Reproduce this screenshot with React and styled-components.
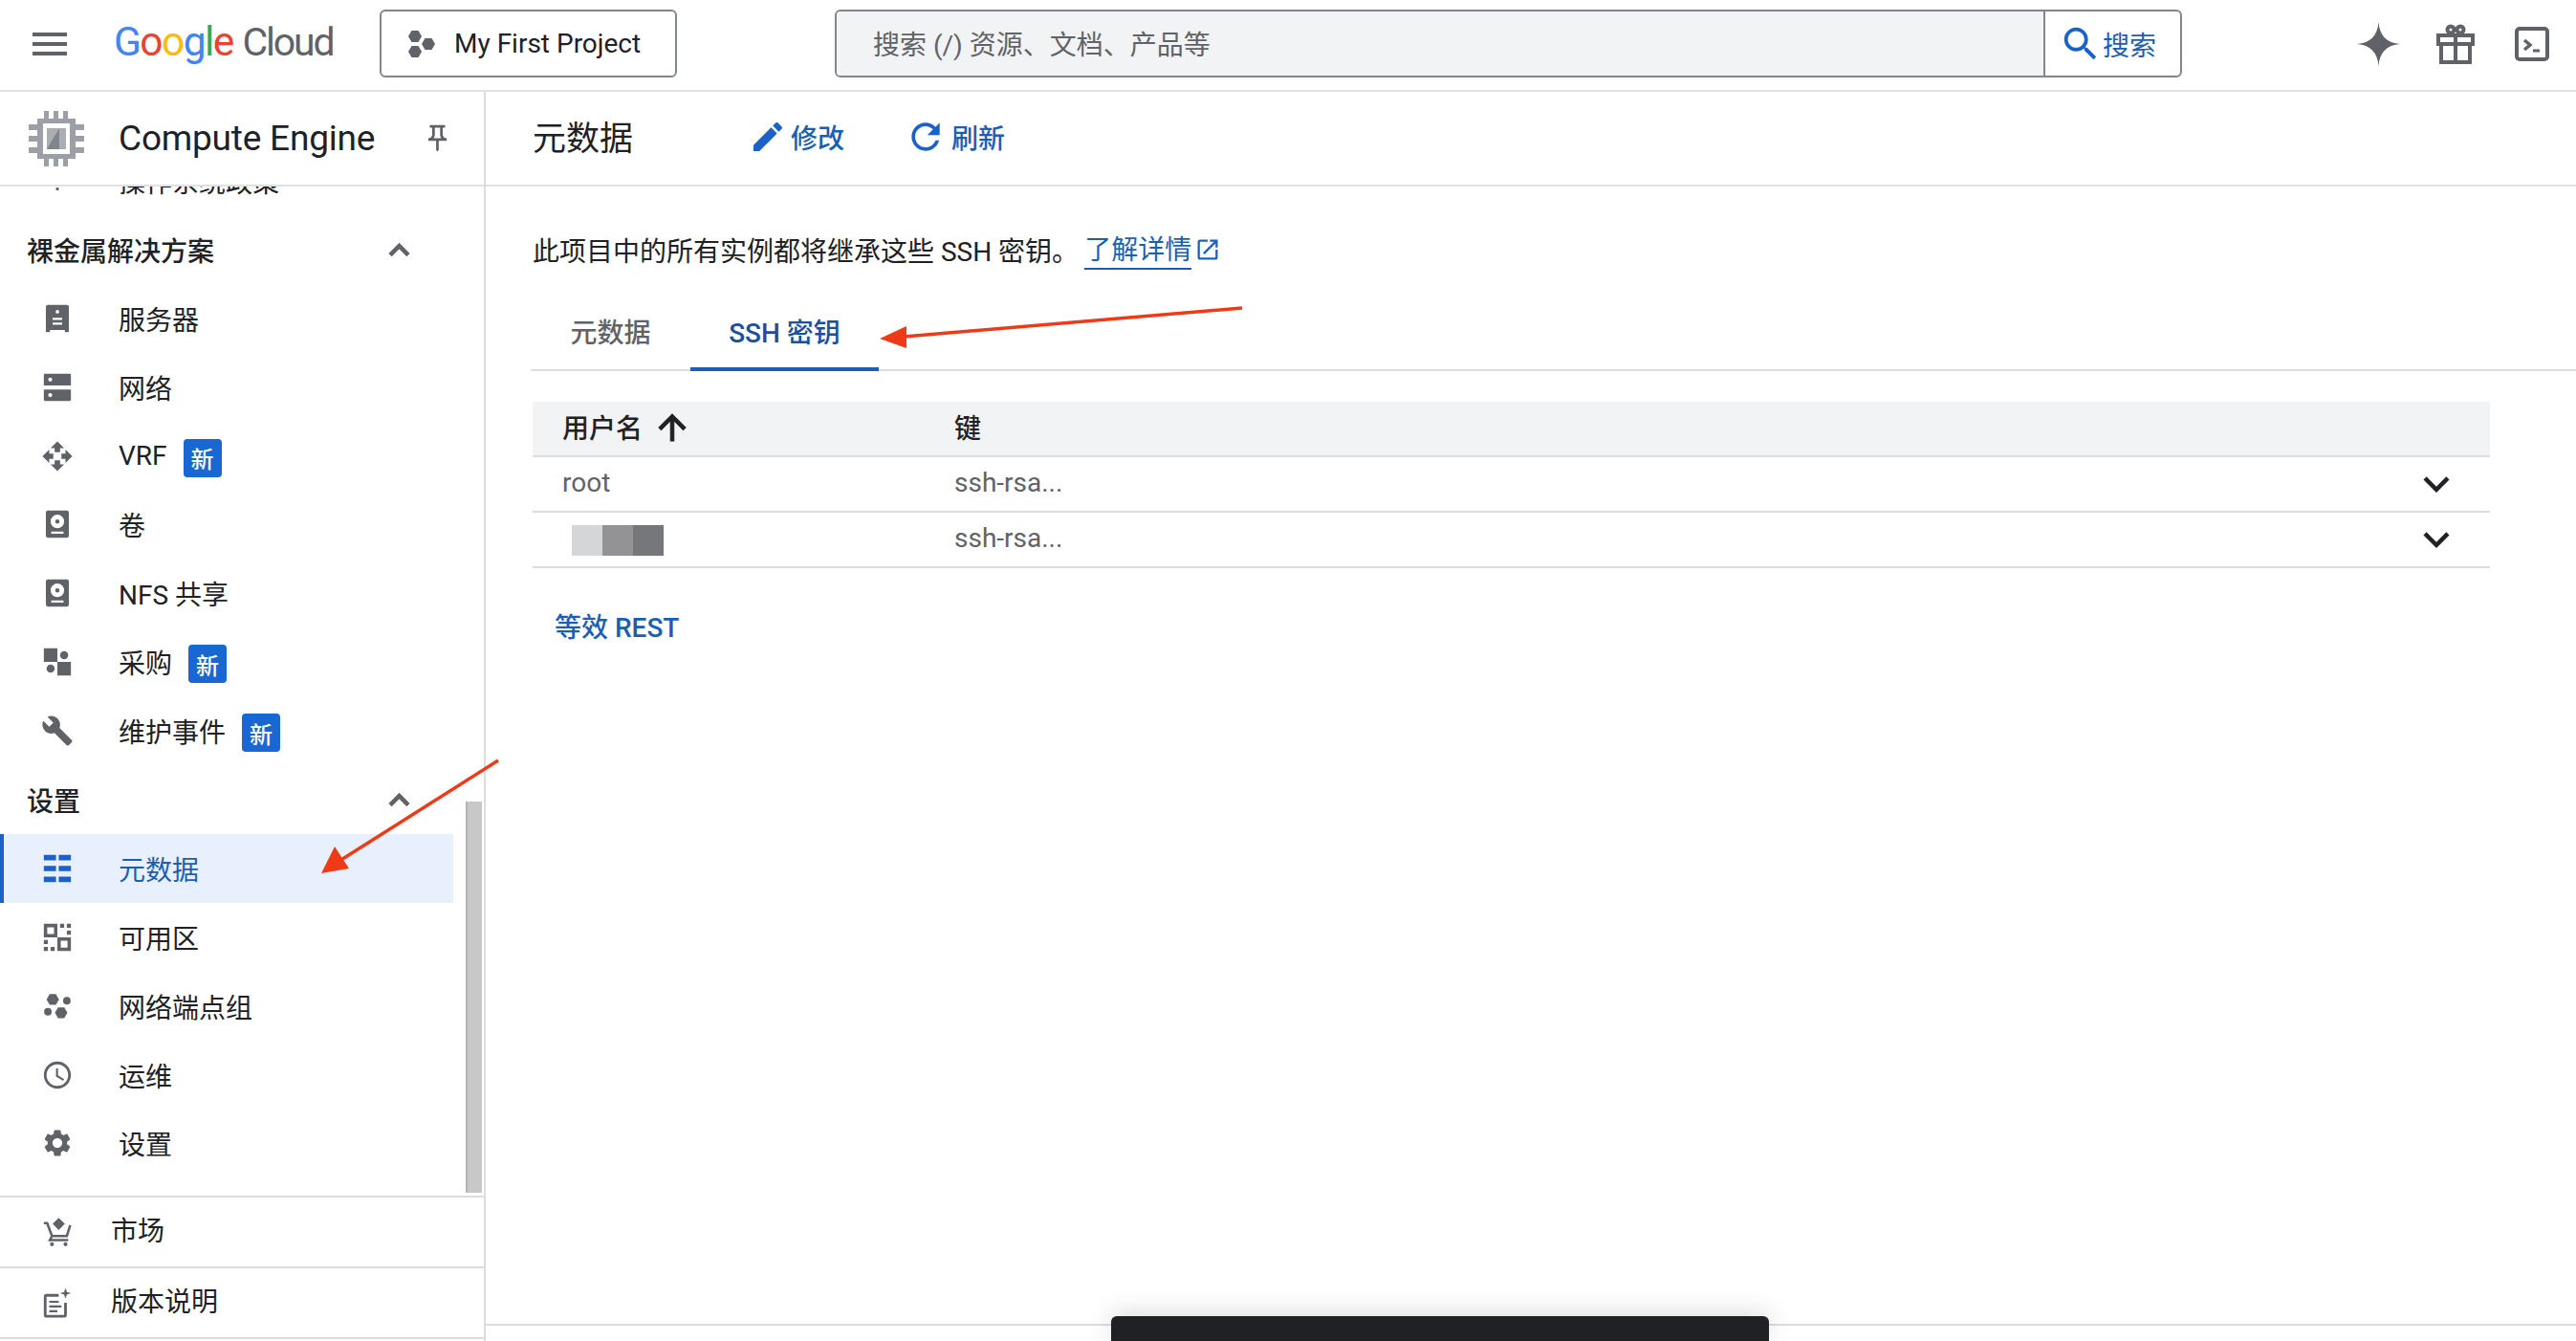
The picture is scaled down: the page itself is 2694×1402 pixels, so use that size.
import React from "react";
import styled, { createGlobalStyle } from "styled-components";

const FONT = `Roboto, "Noto Sans CJK SC", sans-serif`;

const GlobalStyle = createGlobalStyle`
  html, body {
    margin: 0;
    padding: 0;
    background: #fff;
  }
  body {
    font-family: ${FONT};
    color: #202124;
  }
`;

const Page = styled.div`
  position: relative;
  display: flex;
  flex-direction: column;
  width: 2694px;
  height: 1402px;
  overflow: hidden;
  background: #fff;
`;

const TopBar = styled.header`
  display: flex;
  align-items: center;
  height: 91px;
  flex: none;
  border-bottom: 2px solid #dfe1e3;
  padding: 0 0 3px 28px;
`;

const Burger = styled.svg`
  width: 48px;
  height: 48px;
  margin-right: 43px;
  fill: #5f6368;
`;

const Logo = styled.div`
  display: flex;
  align-items: baseline;
  width: 278px;
  font-size: 42.5px;
  letter-spacing: -1.6px;
  line-height: 1;
  margin-top: -2px;
`;

const LogoLetter = styled.span`
  color: ${(p) => p.$color};
`;

const LogoCloud = styled.span`
  color: #5f6368;
  margin-left: 10px;
  font-size: 41px;
  letter-spacing: -2.2px;
`;

const ProjectButton = styled.div`
  display: flex;
  align-items: center;
  width: 311px;
  height: 71px;
  box-sizing: border-box;
  border: 2px solid #80868b;
  border-radius: 6px;
  padding-left: 28px;
  margin-right: 165px;
  font-size: 28px;
  gap: 19px;
`;

const ProjectIcon = styled.svg`
  width: 29px;
  height: 30px;
  fill: #5f6368;
`;

const SearchBox = styled.div`
  display: flex;
  width: 1409px;
  height: 71px;
  box-sizing: border-box;
  border: 2px solid #80868b;
  border-radius: 6px;
  overflow: hidden;
  margin-right: 183px;
`;

const SearchInput = styled.div`
  flex: 1;
  display: flex;
  align-items: center;
  padding: 0 0 2px 38px;
  background: #f1f3f4;
  border-right: 2px solid #80868b;
  color: #5f6368;
  font-size: 28px;
`;

const SearchButton = styled.div`
  width: 141px;
  display: flex;
  align-items: center;
  padding-left: 14px;
  box-sizing: border-box;
  color: #1a5fb4;
  font-size: 28px;
`;

const TopIcons = styled.div`
  display: flex;
  align-items: center;
`;

const TopIcon = styled.svg`
  display: block;
  margin-right: ${(p) => p.$gap}px;
`;

const Body = styled.div`
  display: flex;
  flex: 1;
  min-height: 0;
`;

const Sidebar = styled.aside`
  display: flex;
  flex-direction: column;
  flex: none;
  width: 506px;
  border-right: 2px solid #dadce0;
`;

const SideHeader = styled.div`
  display: flex;
  align-items: center;
  flex: none;
  height: 97px;
  border-bottom: 2px solid #dfe1e3;
  padding-left: 30px;
  font-size: 37px;
`;

const ChipIcon = styled.svg`
  width: 58px;
  height: 58px;
  margin-right: 36px;
  flex: none;
`;

const SideTitle = styled.span`
  width: 317px;
  flex: none;
  letter-spacing: -0.2px;
`;

const PinIcon = styled.svg`
  width: 33px;
  height: 33px;
  fill: #5f6368;
`;

const NavList = styled.nav`
  position: relative;
  flex: 1;
  min-height: 0;
  overflow: hidden;
`;

const NavScroll = styled.div`
  margin-top: -42px;
`;

const SectionHead = styled.div`
  display: flex;
  align-items: center;
  justify-content: space-between;
  height: 71.9px;
  padding: 0 68px 0 28px;
  font-size: 28px;
  font-weight: 500;
`;

const Chevron = styled.svg`
  width: 41px;
  height: 41px;
  margin-top: 2px;
  fill: #5f6368;
  stroke: #5f6368;
  stroke-width: 0.7;
`;

const NavRow = styled.div`
  display: flex;
  align-items: center;
  width: 474px;
  height: 71.9px;
  box-sizing: border-box;
  padding-left: ${(p) => (p.$active ? 39 : 43)}px;
  border-left: ${(p) => (p.$active ? "4px solid #1a62c9" : "none")};
  background: ${(p) => (p.$active ? "#e8f0fe" : "transparent")};
  color: ${(p) => (p.$active ? "#1a5fb4" : "#202124")};
  font-size: 28px;
`;

const RowIcon = styled.svg`
  width: 34px;
  height: 34px;
  flex: none;
  margin-right: 47px;
  fill: ${(p) => (p.$active ? "#1a62c9" : "#5f6368")};
  color: ${(p) => (p.$active ? "#1a62c9" : "#5f6368")};
`;

const NewBadge = styled.span`
  display: flex;
  align-items: center;
  justify-content: center;
  width: 40px;
  height: 40px;
  margin: 4px 0 0 17px;
  border-radius: 4px;
  background: #1967d2;
  color: #fff;
  font-size: 24px;
  font-weight: 500;
`;

const Scrollbar = styled.div`
  position: absolute;
  right: 2px;
  bottom: 3px;
  width: 17px;
  height: 409px;
  box-sizing: border-box;
  background: #c8c8c8;
  border-left: 2px solid #b4b4b4;
`;

const SideFooter = styled.div`
  flex: none;
  border-top: 2px solid #dadce0;
  padding-bottom: 2px;
`;

const FooterRow = styled.div`
  display: flex;
  align-items: center;
  height: 66px;
  padding: 0 0 6px 43px;
  border-bottom: 2px solid #dadce0;
  font-size: 28px;
`;

const FooterIcon = styled(RowIcon)`
  margin: 6px 39px 0 0;
`;

const Main = styled.main`
  flex: 1;
  min-width: 0;
  display: flex;
  flex-direction: column;
`;

const MainHeader = styled.div`
  display: flex;
  align-items: center;
  flex: none;
  height: 97px;
  border-bottom: 2px solid #dfe1e3;
  padding-left: 49px;
`;

const PageTitle = styled.h1`
  margin: 0 121px 6px 0;
  font-size: 35px;
  font-weight: 400;
`;

const ActionButton = styled.div`
  display: flex;
  align-items: center;
  margin: 0 ${(p) => p.$gap}px 3px 0;
  color: #1a5fb4;
  font-size: 28px;
  font-weight: 500;
`;

const ActionIcon = styled.svg`
  width: ${(p) => p.$size}px;
  height: ${(p) => p.$size}px;
  margin-right: ${(p) => p.$mr}px;
  fill: #1a62c9;
`;

const Content = styled.div`
  flex: 1;
  min-height: 0;
  padding: 47px 0 0 47px;
`;

const Description = styled.p`
  display: flex;
  align-items: center;
  margin: 0 0 0 2px;
  height: 38px;
  font-size: 28px;
`;

const HelpLink = styled.a`
  margin-left: 6px;
  color: #1a5fb4;
  border-bottom: 2px solid #1a5fb4;
  line-height: 36px;
  padding-top: 3px;
`;

const ExternalIcon = styled.svg`
  width: 28px;
  height: 28px;
  margin-left: 3px;
  fill: #1a62c9;
`;

const Tabs = styled.div`
  display: flex;
  margin-top: 40px;
  border-bottom: 2px solid #dadce0;
  height: 66px;
  box-sizing: content-box;
`;

const Tab = styled.div`
  display: flex;
  align-items: center;
  justify-content: center;
  box-sizing: border-box;
  width: ${(p) => p.$width}px;
  height: 68px;
  padding-bottom: 12px;
  font-size: 28px;
  font-weight: 500;
  color: ${(p) => (p.$active ? "#1c4f9c" : "#5f6368")};
  border-bottom: 4px solid ${(p) => (p.$active ? "#1a5fb4" : "transparent")};
`;

const Table = styled.div`
  margin: 32px 90px 0 2px;
`;

const HeadRow = styled.div`
  display: grid;
  grid-template-columns: 410px 1fr;
  height: 51px;
  align-items: center;
  padding: 0 0 5px 31px;
  background: #f1f3f4;
  border-bottom: 2px solid #dadce0;
  font-size: 28px;
  font-weight: 500;
`;

const HeadCell = styled.div`
  display: flex;
  align-items: center;
`;

const SortIcon = styled.svg`
  width: 42px;
  height: 42px;
  margin: 2px 0 0 10px;
  fill: #202124;
  stroke: #202124;
  stroke-width: 0.6;
`;

const BodyRow = styled.div`
  display: grid;
  grid-template-columns: 410px 1fr 83px;
  height: 56px;
  align-items: center;
  padding-left: 31px;
  border-bottom: 2px solid #dadce0;
  color: #5f6368;
  font-size: 28px;
`;

const CellText = styled.div`
  margin-bottom: 3px;
`;

const ExpandIcon = styled.svg`
  width: 54px;
  height: 54px;
  fill: #202124;
`;

const Redacted = styled.div`
  display: flex;
  margin: 2px 0 0 10px;
`;

const RedactedBlock = styled.span`
  width: 32px;
  height: 32px;
  background: ${(p) => p.$color};
`;

const RestLink = styled.a`
  display: block;
  margin: 40px 0 0 25px;
  font-size: 28px;
  font-weight: 500;
  color: #1a5fb4;
`;

const MainFooter = styled.div`
  flex: none;
  height: 16px;
  border-top: 2px solid #dadce0;
`;

const DarkBar = styled.div`
  position: absolute;
  left: 1162px;
  bottom: 0;
  width: 688px;
  height: 26px;
  background: #202124;
  border-radius: 6px 6px 0 0;
  box-shadow: 0 -4px 24px rgba(60, 64, 67, 0.18);
`;

const Annotations = styled.svg`
  position: absolute;
  left: 0;
  top: 0;
  width: 2694px;
  height: 1402px;
  pointer-events: none;
`;

const hex = (cx, cy, r) => {
  const h = r * 0.866;
  return `M${cx - r} ${cy}L${cx - r / 2} ${cy - h}H${cx + r / 2}L${cx + r} ${cy}L${cx + r / 2} ${cy + h}H${cx - r / 2}Z`;
};

const circle = (cx, cy, r) =>
  `M${cx - r} ${cy}a${r} ${r} 0 1 0 ${r * 2} 0a${r} ${r} 0 1 0 ${-r * 2} 0Z`;

const PATHS = {
  os: "M12 3l1.5 4h-3zM3 10h2v2H3zM19 10h2v2h-2zM8 9h8l-1 6h-6zM11 17h2v2h-2z",
  server:
    "M5 2h14a1.5 1.5 0 0 1 1.5 1.5V21.5a.5.5 0 0 1-.5.5h-2.5v-1.5h-11V22H4a.5.5 0 0 1-.5-.5V3.5A1.5 1.5 0 0 1 5 2z" +
    circle(12, 7, 1.3) +
    "M8.5 11.5h7v1.5h-7zM8.5 15h7v1.5h-7z",
  dns:
    "M3 2h18a1 1 0 0 1 1 1v7.5H2V3a1 1 0 0 1 1-1zM2 13.5h20V21a1 1 0 0 1-1 1H3a1 1 0 0 1-1-1z" +
    circle(6.7, 6.2, 1.5) +
    circle(6.7, 17.7, 1.5),
  vrf: "M10 9h4V6h3l-5-5-5 5h3v3zm-1 1H6V7l-5 5 5 5v-3h3v-4zm14 2l-5-5v3h-3v4h3v3l5-5zm-9 3h-4v3H7l5 5 5-5h-3v-3z",
  volume:
    "M5 2h14a1.5 1.5 0 0 1 1.5 1.5v17a1.5 1.5 0 0 1-1.5 1.5H5a1.5 1.5 0 0 1-1.5-1.5v-17A1.5 1.5 0 0 1 5 2z" +
    circle(12, 10, 5) +
    "M7.5 17.5h9v1.5h-9z",
  volumeDot: circle(12, 10, 1.6),
  purchase:
    "M2 2h10v10H2zM12 12h10v10H12z" + circle(17, 7, 3) + circle(7, 17, 3),
  build:
    "M22.7 19l-9.1-9.1c.9-2.3.4-5-1.5-6.9-2-2-5-2.4-7.4-1.3L9 6 6 9 1.6 4.7C.4 7.1.9 10.1 2.9 12.1c1.9 1.9 4.6 2.4 6.9 1.5l9.1 9.1c.4.4 1 .4 1.4 0l2.3-2.3c.5-.4.5-1.1.1-1.4z",
  metadata:
    "M2 2h9v4H2zM13 2h9v4h-9zM2 10h9v4H2zM13 10h9v4h-9zM2 18h9v4H2zM13 18h9v4h-9z",
  zones:
    "M2 2h10v10H2zM4.5 4.5v5h5v-5zM12 12h10v10H12zM14.5 14.5v5h5v-5zM14 2h3v3h-3zM19 2h3v3h-3zM19 7h3v3h-3zM2 14h3v3H2zM2 19h3v3H2zM7 19h3v3H7z",
  endpoints:
    hex(8.6, 7, 4.6) + circle(19, 8, 2.8) + circle(5, 16, 2.8) + hex(14.8, 16.8, 4.6),
  clock:
    "M11.99 2C6.47 2 2 6.48 2 12s4.47 10 9.99 10C17.52 22 22 17.52 22 12S17.52 2 11.99 2zM12 20c-4.42 0-8-3.58-8-8s3.58-8 8-8 8 3.58 8 8-3.58 8-8 8zm.5-13H11v6l5.25 3.15.75-1.23-4.5-2.67z",
  settings:
    "M19.14 12.94c.04-.3.06-.61.06-.94 0-.32-.02-.64-.07-.94l2.03-1.58c.18-.14.23-.41.12-.61l-1.92-3.32c-.12-.22-.37-.29-.59-.22l-2.39.96c-.5-.38-1.03-.7-1.62-.94l-.36-2.54c-.04-.24-.24-.41-.48-.41h-3.84c-.24 0-.43.17-.47.41l-.36 2.54c-.59.24-1.13.57-1.62.94l-2.39-.96c-.22-.08-.47 0-.59.22L2.74 8.87c-.12.21-.08.47.12.61l2.03 1.58c-.05.3-.09.63-.09.94s.02.64.07.94l-2.03 1.58c-.18.14-.23.41-.12.61l1.92 3.32c.12.22.37.29.59.22l2.39-.96c.5.38 1.03.7 1.62.94l.36 2.54c.05.24.24.41.48.41h3.84c.24 0 .44-.17.47-.41l.36-2.54c.59-.24 1.13-.56 1.62-.94l2.39.96c.22.08.47 0 .59-.22l1.92-3.32c.12-.22.07-.47-.12-.61l-2.01-1.58zM12 15.6c-1.98 0-3.6-1.62-3.6-3.6s1.62-3.6 3.6-3.6 3.6 1.62 3.6 3.6-1.62 3.6-3.6 3.6z",
};

const Glyph = ({ name, active }) => (
  <RowIcon viewBox="0 0 24 24" $active={active}>
    <path d={PATHS[name]} fillRule="evenodd" />
    {name === "volume" && <path d={PATHS.volumeDot} />}
  </RowIcon>
);

const CartIcon = () => (
  <FooterIcon viewBox="0 0 24 24">
    <path d="M13 1.5l4.5 4.5-4.5 4.5L8.500 6z" />
    <path
      d="M2 5.500h2.500L8 15h11l2.500-8M8 15l-1.500 3H20"
      fill="none"
      stroke="currentColor"
      strokeWidth="1.8"
    />
    <path d={circle(8, 21, 1.5) + circle(18, 21, 1.5)} />
  </FooterIcon>
);

const NotesIcon = () => (
  <FooterIcon viewBox="0 0 24 24">
    <path
      d="M13 6.500H4a1 1 0 0 0-1 1V21a1 1 0 0 0 1 1h13a1 1 0 0 0 1-1V12"
      fill="none"
      stroke="currentColor"
      strokeWidth="2"
    />
    <path d="M6 10.500h7V12H6zM6 14h9v1.500H6zM6 17.500h6V19H6z" />
    <path d="M18 1l1 3 3 1-3 1-1 3-1-3-3-1 3-1z" />
  </FooterIcon>
);

const NAV = [
  { type: "row", icon: "os", label: "操作系统政策" },
  { type: "head", label: "裸金属解决方案" },
  { type: "row", icon: "server", label: "服务器" },
  { type: "row", icon: "dns", label: "网络" },
  { type: "row", icon: "vrf", label: "VRF", badge: true },
  { type: "row", icon: "volume", label: "卷" },
  { type: "row", icon: "volume", label: "NFS 共享" },
  { type: "row", icon: "purchase", label: "采购", badge: true },
  { type: "row", icon: "build", label: "维护事件", badge: true },
  { type: "head", label: "设置" },
  { type: "row", icon: "metadata", label: "元数据", active: true },
  { type: "row", icon: "zones", label: "可用区" },
  { type: "row", icon: "endpoints", label: "网络端点组" },
  { type: "row", icon: "clock", label: "运维" },
  { type: "row", icon: "settings", label: "设置" },
];

const GOOGLE = [
  ["G", "#4285f4"],
  ["o", "#ea4335"],
  ["o", "#fbbc05"],
  ["g", "#4285f4"],
  ["l", "#34a853"],
  ["e", "#ea4335"],
];

const UP = "M12 8l-6 6 1.41 1.41L12 10.83l4.59 4.58L18 14z";
const DOWN = "M16.59 8.59L12 13.17 7.41 8.59 6 10l6 6 6-6z";

const KEYS = [{ user: "root" }, { redacted: true }];

export default function App() {
  return (
    <Page>
      <GlobalStyle />
      <TopBar>
        <Burger viewBox="0 0 24 24">
          <path d="M3 18h18v-2H3v2zm0-5h18v-2H3v2zm0-7v2h18V6H3z" />
        </Burger>
        <Logo>
          {GOOGLE.map(([letter, color], i) => (
            <LogoLetter key={i} $color={color}>
              {letter}
            </LogoLetter>
          ))}
          <LogoCloud>Cloud</LogoCloud>
        </Logo>
        <ProjectButton>
          <ProjectIcon viewBox="0 0 29 30">
            <path d={hex(7, 7, 7) + hex(7, 23, 7) + hex(21, 15, 7)} />
          </ProjectIcon>
          My First Project
        </ProjectButton>
        <SearchBox>
          <SearchInput>搜索 (/) 资源、文档、产品等</SearchInput>
          <SearchButton>
            <svg width="46" height="46" viewBox="0 0 24 24" fill="#1a62c9">
              <path d="M15.5 14h-.79l-.28-.27C15.41 12.59 16 11.11 16 9.500 16 5.910 13.090 3 9.500 3S3 5.910 3 9.500 5.910 16 9.500 16c1.610 0 3.090-.59 4.230-1.570l.27.28v.79l5 4.990L20.490 19l-4.990-5zm-6 0C7.010 14 5 11.990 5 9.500S7.010 5 9.500 5 14 7.010 14 9.500 11.990 14 9.500 14z" />
            </svg>
            搜索
          </SearchButton>
        </SearchBox>
        <TopIcons>
          <TopIcon $gap={38} width="45" height="46" viewBox="0 0 45 46" fill="#5f6368">
            <path d="M22.500 0C23.500 14 31 22 45 23 31 24 23.500 32 22.500 46 21.500 32 14 24 0 23 14 22 21.500 14 22.500 0z" />
          </TopIcon>
          <TopIcon $gap={42} width="40" height="42" viewBox="0 0 40 42" fill="none" stroke="#5f6368" strokeWidth="4">
            <circle cx="15" cy="6" r="3.500" />
            <circle cx="25" cy="6" r="3.500" />
            <path d="M2 12h36v9H2zM5 21v19h30V21M20 12v28" />
          </TopIcon>
          <TopIcon $gap={0} width="36" height="36" viewBox="0 0 36 36" fill="none" stroke="#5f6368">
            <rect x="2" y="2" width="32" height="32" rx="3" strokeWidth="4" />
            <path d="M10 14l6 5-6 5" strokeWidth="3.500" />
            <path d="M19 25h7" strokeWidth="3" />
          </TopIcon>
        </TopIcons>
      </TopBar>

      <Body>
        <Sidebar>
          <SideHeader>
            <ChipIcon viewBox="0 0 58 58">
              <path
                fill="#9aa0a6"
                d="M16 0h5v10h-5zM26 0h5v10h-5zM36 0h5v10h-5zM16 48h5v10h-5zM26 48h5v10h-5zM36 48h5v10h-5zM0 14h10v6H0zM0 26h10v6H0zM0 38h10v6H0zM48 14h10v6H48zM48 26h10v6H48zM48 38h10v6H48z"
              />
              <path fill="#9aa0a6" fillRule="evenodd" d="M9 8h40v42H9zM15 13v32h28V13z" />
              <path fill="#a9aeb3" d="M19 18h20v22H19z" />
              <path fill="#80868b" d="M32 18v22H19z" />
            </ChipIcon>
            <SideTitle>Compute Engine</SideTitle>
            <PinIcon viewBox="0 0 24 24">
              <path d="M14 4v5c0 1.120.37 2.160 1 3H9c.65-.86 1-1.900 1-3V4h4m3-2H7c-.55 0-1 .45-1 1s.45 1 1 1h1v5c0 1.660-1.340 3-3 3v2h5.970v7l1 1 1-1v-7H19v-2c-1.660 0-3-1.340-3-3V4h1c.55 0 1-.45 1-1s-.45-1-1-1z" />
            </PinIcon>
          </SideHeader>
          <NavList>
            <NavScroll>
              {NAV.map((item) =>
                item.type === "head" ? (
                  <SectionHead key={item.label}>
                    {item.label}
                    <Chevron viewBox="0 0 24 24">
                      <path d={UP} />
                    </Chevron>
                  </SectionHead>
                ) : (
                  <NavRow key={item.label + item.icon} $active={item.active}>
                    <Glyph name={item.icon} active={item.active} />
                    {item.label}
                    {item.badge && <NewBadge>新</NewBadge>}
                  </NavRow>
                )
              )}
            </NavScroll>
            <Scrollbar />
          </NavList>
          <SideFooter>
            <FooterRow>
              <CartIcon />
              市场
            </FooterRow>
            <FooterRow>
              <NotesIcon />
              版本说明
            </FooterRow>
          </SideFooter>
        </Sidebar>

        <Main>
          <MainHeader>
            <PageTitle>元数据</PageTitle>
            <ActionButton $gap={63}>
              <ActionIcon $size={40} $mr={4} viewBox="0 0 24 24">
                <path d="M3 17.250V21h3.750L17.810 9.940l-3.750-3.750L3 17.250zM20.710 7.040c.39-.39.39-1.020 0-1.410l-2.340-2.340c-.39-.39-1.020-.39-1.410 0l-1.830 1.830 3.750 3.750 1.830-1.830z" />
              </ActionIcon>
              修改
            </ActionButton>
            <ActionButton $gap={0}>
              <ActionIcon $size={44} $mr={5} viewBox="0 0 24 24">
                <path d="M17.650 6.350C16.200 4.900 14.210 4 12 4c-4.420 0-7.990 3.580-7.990 8s3.570 8 7.990 8c3.730 0 6.840-2.550 7.730-6h-2.080c-.82 2.330-3.040 4-5.650 4-3.310 0-6-2.690-6-6s2.690-6 6-6c1.660 0 3.140.69 4.220 1.780L13 11h7V4l-2.350 2.350z" />
              </ActionIcon>
              刷新
            </ActionButton>
          </MainHeader>
          <Content>
            <Description>
              此项目中的所有实例都将继承这些 SSH 密钥。
              <HelpLink>了解详情</HelpLink>
              <ExternalIcon viewBox="0 0 24 24">
                <path d="M19 19H5V5h7V3H5c-1.110 0-2 .9-2 2v14c0 1.100.89 2 2 2h14c1.100 0 2-.9 2-2v-7h-2v7zM14 3v2h3.590l-9.830 9.830 1.410 1.410L19 6.410V10h2V3h-7z" />
              </ExternalIcon>
            </Description>
            <Tabs>
              <Tab $width={167}>元数据</Tab>
              <Tab $width={197} $active>
                SSH 密钥
              </Tab>
            </Tabs>
            <Table>
              <HeadRow>
                <HeadCell>
                  用户名
                  <SortIcon viewBox="0 0 24 24">
                    <path d="M4 12l1.410 1.410L11 7.830V20h2V7.830l5.580 5.590L20 12l-8-8-8 8z" />
                  </SortIcon>
                </HeadCell>
                <HeadCell>键</HeadCell>
              </HeadRow>
              {KEYS.map((row, i) => (
                <BodyRow key={i}>
                  {row.redacted ? (
                    <Redacted>
                      <RedactedBlock $color="#d5d6d8" />
                      <RedactedBlock $color="#939396" />
                      <RedactedBlock $color="#76777b" />
                    </Redacted>
                  ) : (
                    <CellText>{row.user}</CellText>
                  )}
                  <CellText>ssh-rsa...</CellText>
                  <ExpandIcon viewBox="0 0 24 24">
                    <path d={DOWN} />
                  </ExpandIcon>
                </BodyRow>
              ))}
            </Table>
            <RestLink>等效 REST</RestLink>
          </Content>
          <MainFooter />
        </Main>
      </Body>

      <DarkBar />
      <Annotations viewBox="0 0 2694 1402">
        <path d="M1299 322L945 352" stroke="#ef3a18" strokeWidth="3.500" fill="none" />
        <path d="M920 354L948 341L948 364Z" fill="#ef3a18" />
        <path d="M521 795L352 902" stroke="#ef3a18" strokeWidth="3.500" fill="none" />
        <path d="M336 913L350 885L365 908Z" fill="#ef3a18" />
      </Annotations>
    </Page>
  );
}
